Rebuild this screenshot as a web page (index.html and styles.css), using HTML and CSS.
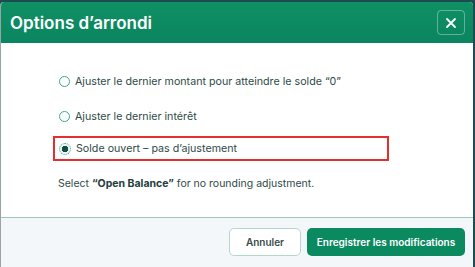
FILE: index.html
```html
<!DOCTYPE html>
<html lang="fr">
<head>
<meta charset="utf-8">
<link rel="stylesheet" href="styles.css">
</head>
<body>
<div class="dialog">
  <div class="header">
    <h1 class="title">Options d’arrondi</h1>
    <button class="close" aria-label="Fermer">
      <svg width="12" height="12" viewBox="0 0 12 12"><path d="M2 2 L10 10 M10 2 L2 10" stroke="#fff" stroke-width="1.8" stroke-linecap="round"/></svg>
    </button>
  </div>
  <div class="body">
    <div class="options">
      <label class="option"><span class="radio"></span>Ajuster le dernier montant pour atteindre le solde “0”</label>
      <label class="option"><span class="radio"></span>Ajuster le dernier intérêt</label>
      <label class="option selected"><span class="radio checked"></span>Solde ouvert – pas d’ajustement</label>
    </div>
    <p class="hint">Select <strong>“Open Balance”</strong> for no rounding adjustment.</p>
  </div>
  <div class="footer">
    <button class="btn secondary">Annuler</button>
    <button class="btn primary">Enregistrer les modifications</button>
  </div>
</div>
</body>
</html>
```
FILE: styles.css
```css
html, body {
  margin: 0;
  padding: 0;
  height: 100%;
  overflow: hidden;
}
body {
  background: #1d4b52;
  font-family: Inter, "Noto Sans", sans-serif;
  padding-top: 2px;
  box-sizing: border-box;
}
.dialog {
  width: 473px;
  height: 265px;
  background: #fff;
  border-radius: 4px 4px 0 0;
  overflow: hidden;
  border-left: 1px solid #9aa3a8;
  box-sizing: border-box;
  display: flex;
  flex-direction: column;
}
.header {
  height: 41px;
  background: linear-gradient(180deg, #0f9063 0%, #0b8560 100%);
  display: flex;
  align-items: center;
  justify-content: space-between;
  padding: 0 8px 0 9px;
  flex-shrink: 0;
}
.title {
  margin: 0;
  color: #fff;
  font-size: 17px;
  font-weight: 600;
}
.close {
  width: 28px;
  height: 25px;
  border: 1px solid rgba(255,255,255,0.35);
  border-radius: 4px;
  background: transparent;
  display: flex;
  align-items: center;
  justify-content: center;
  padding: 0;
}
.body {
  height: 174px;
  padding: 26px 0 0 52px;
  box-sizing: border-box;
  flex-shrink: 0;
  color: #2f4a48;
  font-size: 10.5px;
}
.options {
  display: flex;
  flex-direction: column;
  gap: 10px;
}
.option {
  display: flex;
  align-items: center;
  gap: 6px;
  height: 25px;
  padding-left: 7px;
  box-sizing: border-box;
  width: 336px;
  font-size: 10.7px;
}
.option.selected {
  border: 2px solid #e3302f;
  padding-left: 5px;
  margin-top: -3px;
}
.radio {
  width: 11px;
  height: 11px;
  border: 1.3px solid #3aa88a;
  border-radius: 50%;
  box-sizing: border-box;
  flex-shrink: 0;
  margin-left: -1px;
  margin-right: -1px;
}
.radio.checked {
  border: 1px dotted #3aa88a;
  background: radial-gradient(circle, #164a44 0 3px, #e6f4ef 3.5px);
  width: 12px;
  height: 12px;
}
.hint {
  margin: 16px 0 0 5px;
  color: #2f4a48;
}
.hint strong {
  font-weight: 700;
  color: #22403d;
}
.footer {
  flex: 1;
  background: #f3f7f9;
  border-top: 1px solid #9fc4b8;
  display: flex;
  gap: 6px;
  padding: 10px 0 0 228px;
  align-items: flex-start;
}
.btn {
  height: 28px;
  border-radius: 5px;
  font-family: Inter, "Noto Sans", sans-serif;
  font-size: 10px;
  font-weight: 600;
  padding: 0;
}
.secondary {
  width: 72px;
  background: #fff;
  border: 1px solid #b6d7cd;
  color: #3a4a48;
}
.primary {
  width: 158px;
  background: #0c8a5f;
  border: none;
  color: #fff;
}
```
